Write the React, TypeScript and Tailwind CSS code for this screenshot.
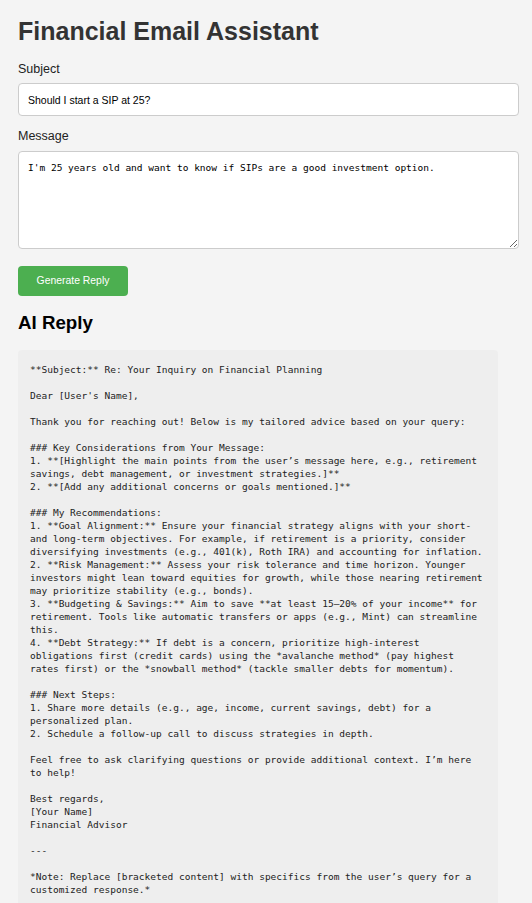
const reply = `**Subject:** Re: Your Inquiry on Financial Planning

Dear [User's Name],

Thank you for reaching out! Below is my tailored advice based on your query:

### Key Considerations from Your Message:
1. **[Highlight the main points from the user’s message here, e.g., retirement
savings, debt management, or investment strategies.]**
2. **[Add any additional concerns or goals mentioned.]**

### My Recommendations:
1. **Goal Alignment:** Ensure your financial strategy aligns with your short-
and long-term objectives. For example, if retirement is a priority, consider
diversifying investments (e.g., 401(k), Roth IRA) and accounting for inflation.
2. **Risk Management:** Assess your risk tolerance and time horizon. Younger
investors might lean toward equities for growth, while those nearing retirement
may prioritize stability (e.g., bonds).
3. **Budgeting & Savings:** Aim to save **at least 15–20% of your income** for
retirement. Tools like automatic transfers or apps (e.g., Mint) can streamline
this.
4. **Debt Strategy:** If debt is a concern, prioritize high-interest
obligations first (credit cards) using the *avalanche method* (pay highest
rates first) or the *snowball method* (tackle smaller debts for momentum).

### Next Steps:
1. Share more details (e.g., age, income, current savings, debt) for a
personalized plan.
2. Schedule a follow-up call to discuss strategies in depth.

Feel free to ask clarifying questions or provide additional context. I’m here
to help!

Best regards,
[Your Name]
Financial Advisor

---

*Note: Replace [bracketed content] with specifics from the user’s query for a
customized response.*`;

export default function App() {
  return (
    <div className="min-h-screen bg-[#f4f4f4] px-[18px] pt-[17px] pb-[20px] font-['Liberation_Sans',Arial,sans-serif] text-[#333]">
      <h1 className="text-[25px] leading-[29px] font-bold text-[#333]">
        Financial Email Assistant
      </h1>

      <label className="mt-[16px] block text-[12.5px] leading-[15px] text-[#222]">
        Subject
      </label>
      <input
        type="text"
        defaultValue="Should I start a SIP at 25?"
        className="mt-[6px] block h-[33px] w-[501px] rounded-[4px] border border-[#ccc] bg-white px-[9px] text-[10.5px] text-black outline-none"
      />

      <label className="mt-[13px] block text-[12.5px] leading-[15px] text-[#222]">
        Message
      </label>
      <textarea
        defaultValue="I'm 25 years old and want to know if SIPs are a good investment option."
        className="mt-[7px] block h-[98px] w-[501px] rounded-[4px] border border-[#ccc] bg-white px-[9px] pt-[9px] font-['DejaVu_Sans_Mono',monospace] text-[9.53px] leading-[13px] text-black outline-none"
      />

      <button
        type="button"
        className="mt-[17px] block h-[30px] w-[110px] rounded-[4px] bg-[#4caf50] text-[10.4px] text-white"
      >
        Generate Reply
      </button>

      <h2 className="mt-[16px] text-[18.7px] leading-[22px] font-bold text-black">
        AI Reply
      </h2>

      <pre className="mt-[16px] w-[480px] rounded-[4px] bg-[#eee] px-[12px] pt-[13px] pb-[12px] font-['DejaVu_Sans_Mono',monospace] text-[9.53px] leading-[13px] whitespace-pre text-[#222]">
        {reply}
      </pre>
    </div>
  );
}
